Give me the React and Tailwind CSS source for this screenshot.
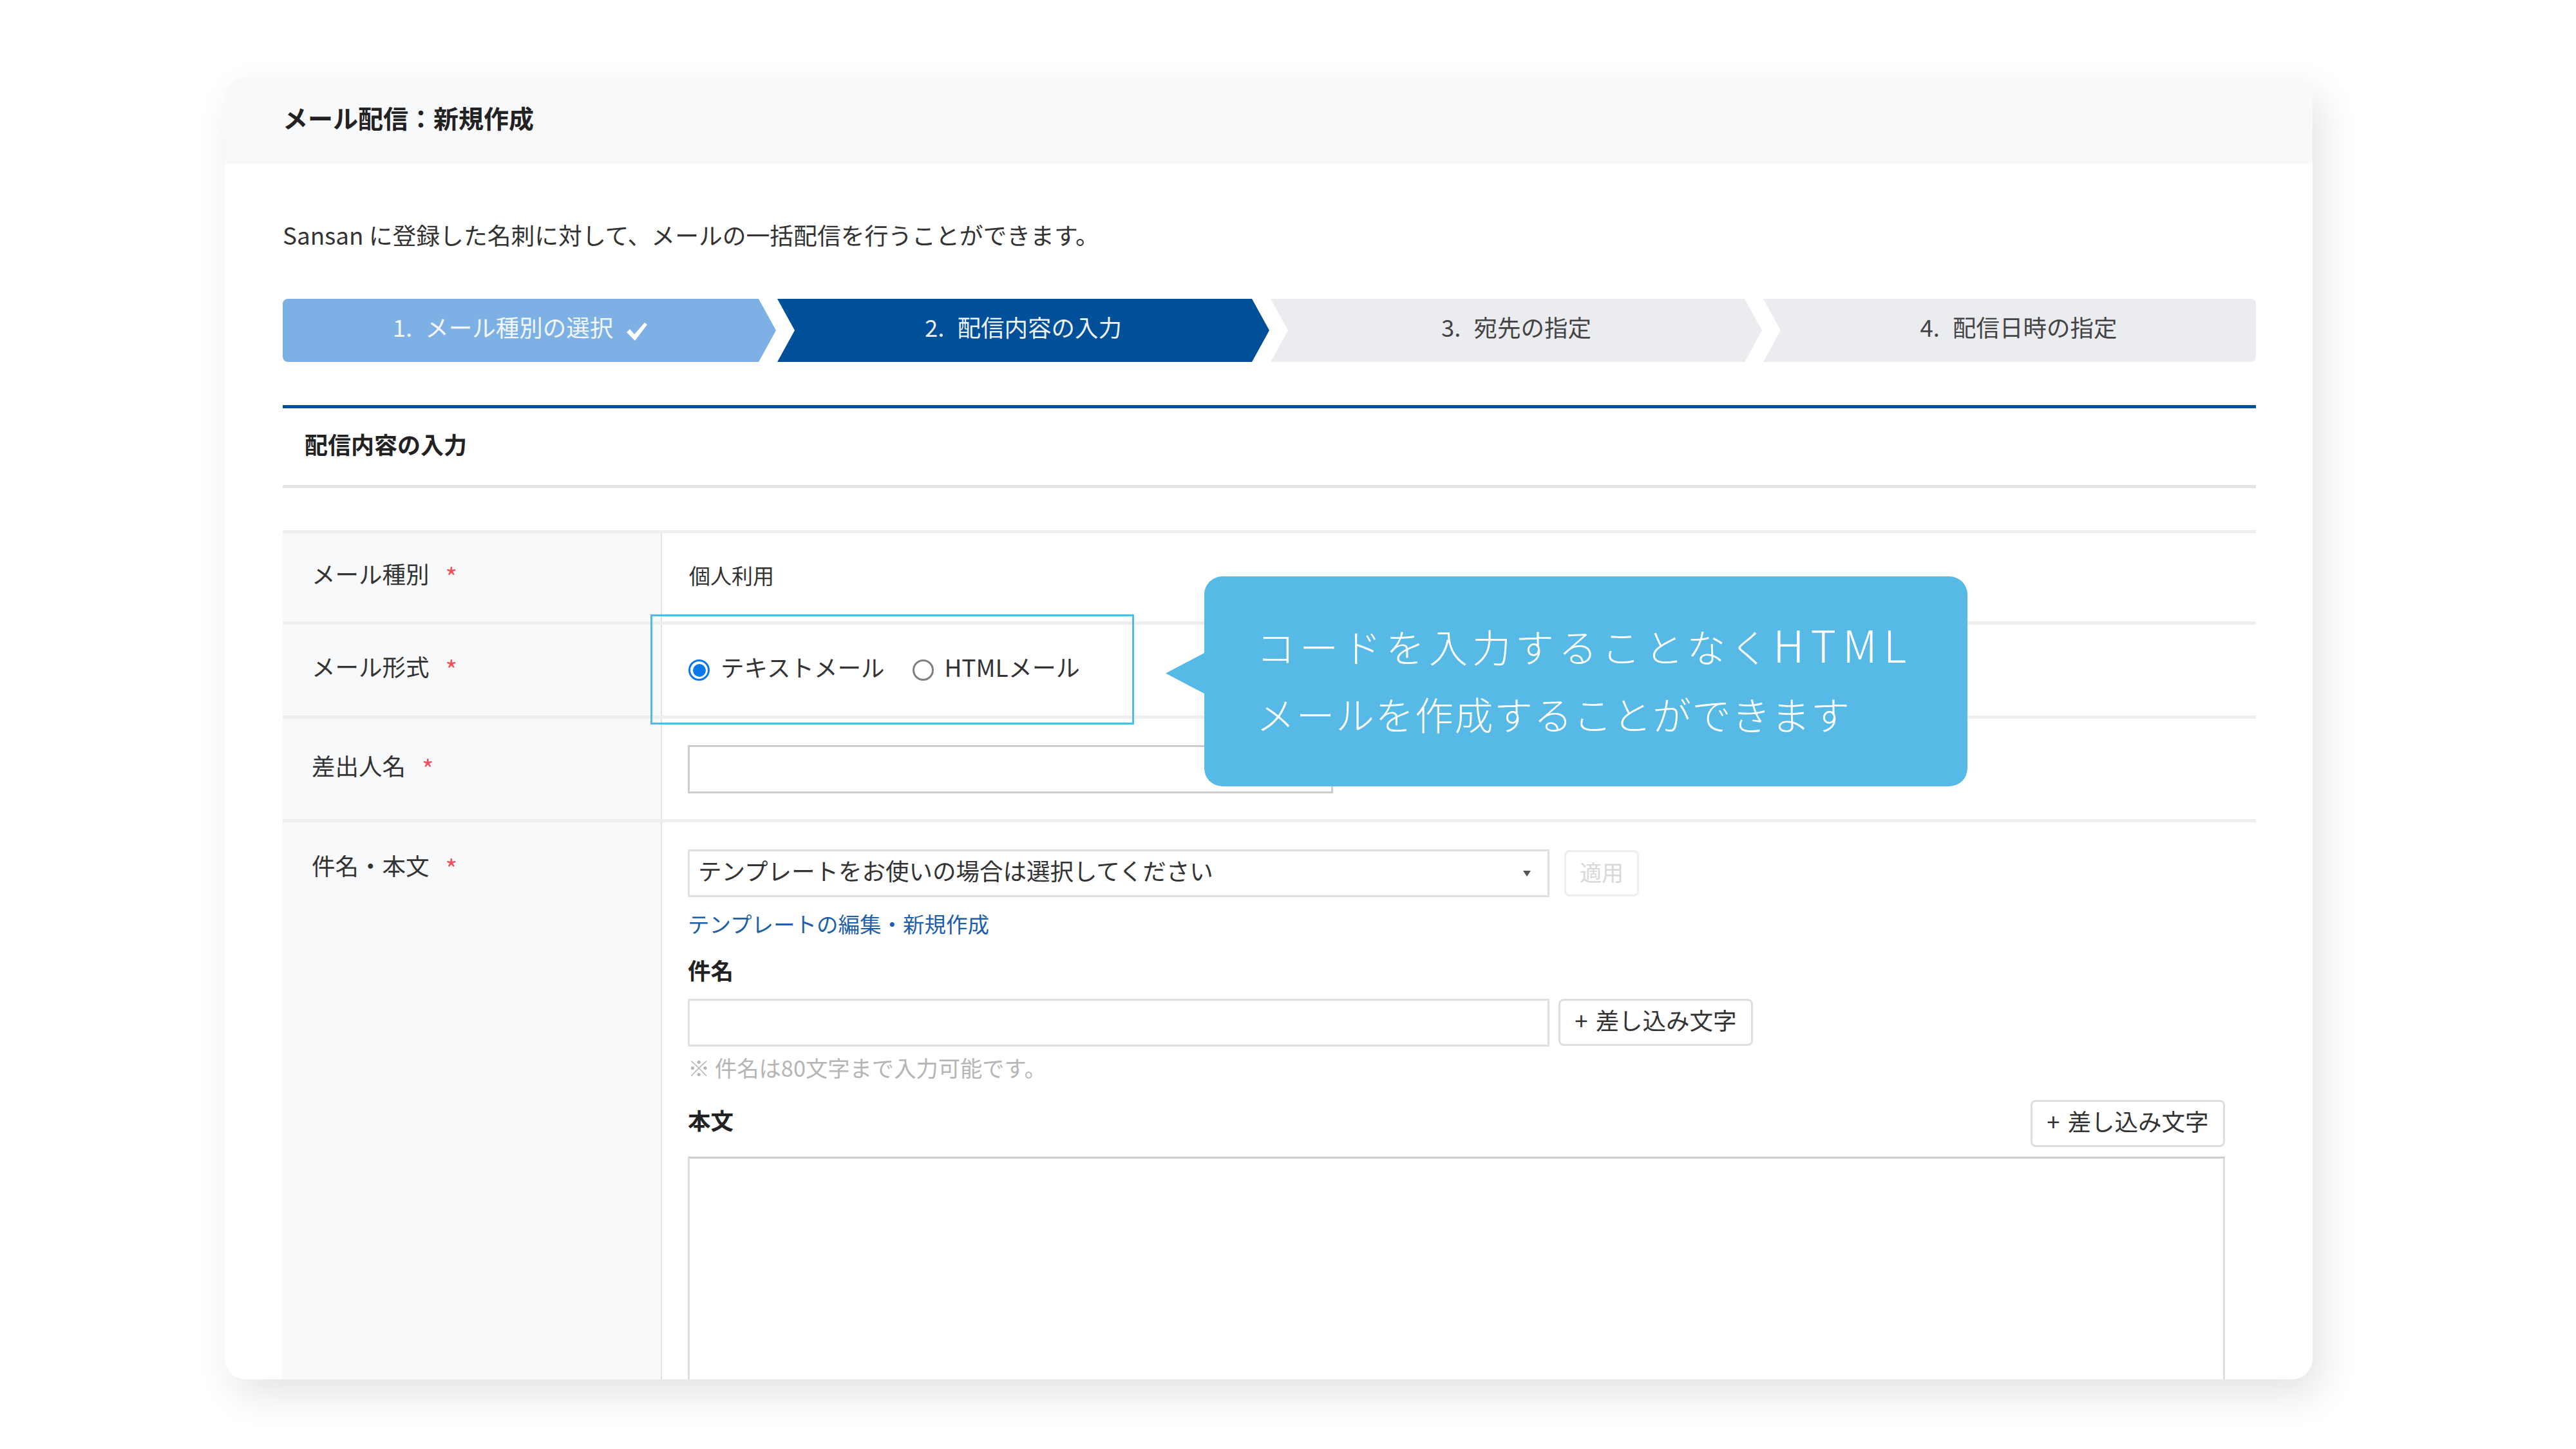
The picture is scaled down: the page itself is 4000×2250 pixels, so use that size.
import React from "react";

const steps = [
  { no: "1.", label: "メール種別の選択", done: true, cls: "w-[766px] bg-[#7db1e5] text-[#f2f7fc] rounded-l-[8px] pr-[28px] [clip-path:polygon(0_0,calc(100%-27px)_0,100%_50%,calc(100%-27px)_100%,0_100%)]" },
  { no: "2.", label: "配信内容の入力", cls: "w-[764px] bg-[#004f99] text-[#eef3f8] [clip-path:polygon(0_0,calc(100%-27px)_0,100%_50%,calc(100%-27px)_100%,0_100%,27px_50%)]" },
  { no: "3.", label: "宛先の指定", cls: "w-[763px] bg-[#ebecf0] text-[#444444] [clip-path:polygon(0_0,calc(100%-27px)_0,100%_50%,calc(100%-27px)_100%,0_100%,27px_50%)]" },
  { no: "4.", label: "配信日時の指定", cls: "w-[765px] bg-[#ebecf0] text-[#444444] rounded-r-[8px] pl-[28px] [clip-path:polygon(0_0,100%_0,100%_100%,0_100%,27px_50%)]" },
];

function Required({ name }) {
  return (
    <div className="flex">
      <span>{name}</span>
      <span className="ml-[25px] text-[#f0525b] text-[40px] mt-[1px]">*</span>
    </div>
  );
}

function InsertButton() {
  return (
    <button className="w-[302px] h-[73px] shrink-0 flex items-center justify-center gap-[12px] pb-[6px] bg-white border-[3px] border-[#dedede] rounded-[8px] text-[36.5px] text-[#333333]">
      <span>+</span>
      <span>差し込み文字</span>
    </button>
  );
}

export default function App() {
  return (
    <div className="w-[4000px] h-[2250px] bg-white pt-[120px] pl-[349px] font-['Noto_Sans_CJK_JP',sans-serif] text-[#333333] overflow-hidden">
      <div className="relative w-[3242px] h-[2022px] bg-white rounded-[32px] shadow-[14px_24px_60px_rgba(0,0,0,0.11)]">
        <div className="h-full rounded-[32px] overflow-hidden">
          <div className="h-[135px] bg-[#f8f9fb] flex items-center pl-[90px] pb-[10px] text-[39px] font-bold text-[#222222]">
            メール配信：新規作成
          </div>

          <div className="pl-[90px] pr-[88px]">
            <p className="mt-[84px] mb-[75px] text-[36.8px] leading-[50px]">
              Sansan に登録した名刺に対して、メールの一括配信を行うことができます。
            </p>

            <div className="flex gap-[2px] h-[98px]">
              {steps.map((s) => (
                <div key={s.no} className={`shrink-0 flex items-center justify-center pb-[10px] text-[36.5px] ${s.cls}`}>
                  <span className="mr-[20px]">{s.no}</span>
                  <span>{s.label}</span>
                  {s.done && (
                    <svg viewBox="0 0 34 30" className="w-[34px] h-[30px] ml-[20px] mt-[14px]">
                      <path d="M1 16 L6 11 L13 19 L29 1 L33 4 L14 29 Z" fill="#ffffff" />
                    </svg>
                  )}
                </div>
              ))}
            </div>

            <div className="mt-[67px] border-t-[5px] border-b-[5px] border-t-[#004f99] border-b-[#e3e3e5] h-[129px] flex items-center pl-[34px] pb-[9px] text-[36px] font-bold text-[#222222]">
              配信内容の入力
            </div>

            <div className="mt-[65px] text-[36.5px]">
              <div className="flex h-[142px] border-t-[5px] border-[#eeeeee]">
                <div className="w-[589px] bg-[#f8f9fb] border-r-2 border-[#dde3ea] pl-[45px] flex items-center pb-[5px]">
                  <Required name="メール種別" />
                </div>
                <div className="pl-[42px] flex items-center pb-[6px] text-[33px]">個人利用</div>
              </div>

              <div className="flex h-[146px] border-t-[5px] border-[#eeeeee]">
                <div className="w-[589px] bg-[#f8f9fb] border-r-2 border-[#dde3ea] pl-[45px] flex items-center pb-[4px]">
                  <Required name="メール形式" />
                </div>
                <div className="pl-[41px] flex items-center">
                  <span className="w-[33px] h-[33px] rounded-full border-[3px] border-[#0a78e8] flex items-center justify-center">
                    <span className="w-[20px] h-[20px] rounded-full bg-[#0a78e8]" />
                  </span>
                  <span className="ml-[17px] -mt-[9px]">テキストメール</span>
                  <span className="ml-[44px] w-[33px] h-[33px] rounded-full border-[3px] border-[#808080]" />
                  <span className="ml-[16px] -mt-[9px] text-[37px]">HTMLメール</span>
                </div>
              </div>

              <div className="flex h-[161px] border-t-[5px] border-[#eeeeee]">
                <div className="w-[589px] bg-[#f8f9fb] border-r-2 border-[#dde3ea] pl-[45px] flex items-center pb-[4px]">
                  <Required name="差出人名" />
                </div>
                <div className="pl-[40px] flex items-center">
                  <input className="w-[1002px] h-[75px] bg-white border-[3px] border-[#cccccc]" />
                </div>
              </div>

              <div className="flex h-[900px] border-t-[5px] border-[#eeeeee]">
                <div className="w-[589px] bg-[#f8f9fb] border-r-2 border-[#dde3ea] pl-[45px] pt-[40px]">
                  <Required name="件名・本文" />
                </div>
                <div className="flex-1 pl-[40px] pr-[48px] pt-[42px]">
                  <div className="flex items-center">
                    <div className="w-[1338px] h-[74px] border-[3px] border-[#e0e0e0] flex items-center justify-between pl-[13px] pr-[26px]">
                      <span className="-mt-[8px]">テンプレートをお使いの場合は選択してください</span>
                      <svg viewBox="0 0 12 9" className="w-[12px] h-[9px]">
                        <path d="M0 0 H12 L6 9 Z" fill="#555555" />
                      </svg>
                    </div>
                    <button className="ml-[23px] w-[116px] h-[72px] pb-[5px] border-[3px] border-[#eeeeee] rounded-[8px] text-[34px] text-[#d8d8d8]">
                      適用
                    </button>
                  </div>
                  <a className="block mt-[19px] text-[33.5px] leading-[44px] text-[#1f5fa8]">テンプレートの編集・新規作成</a>
                  <div className="mt-[28px] text-[35.5px] leading-[44px] font-bold text-[#222222]">件名</div>
                  <div className="mt-[23px] flex gap-[14px]">
                    <input className="w-[1338px] h-[74px] bg-white border-[3px] border-[#e0e0e0]" />
                    <InsertButton />
                  </div>
                  <div className="mt-[10px] text-[34.3px] leading-[44px] text-[#b5b5b5]">※ 件名は80文字まで入力可能です。</div>
                  <div className="mt-[29px] flex items-center justify-between">
                    <div className="text-[35.5px] font-bold text-[#222222] pb-[12px]">本文</div>
                    <InsertButton />
                  </div>
                  <textarea className="block mt-[15px] w-full h-[500px] bg-white border-[3px] border-[#dddddd] border-t-[#cccccc]" />
                </div>
              </div>
            </div>
          </div>
        </div>

        <div className="absolute left-[661px] top-[834px] w-[751px] h-[171px] border-[3px] border-[#55b9e4]" />

        <div className="absolute left-[1521px] top-[775px] w-[1185px] h-[326px] bg-[#57b9e5] rounded-[28px] pl-[81px] pt-[52px] text-white font-light text-[60px] leading-[105px]">
          <div className="absolute -left-[60px] top-[119px] w-[60px] h-[63px] bg-[#57b9e5] [clip-path:polygon(100%_0,0_50%,100%_100%)]" />
          <div className="tracking-[7px]">
            コードを入力することなく<span className="text-[68px] tracking-[10px]">HTML</span>
          </div>
          <div className="tracking-[1.5px]">メールを作成することができます</div>
        </div>
      </div>
    </div>
  );
}
